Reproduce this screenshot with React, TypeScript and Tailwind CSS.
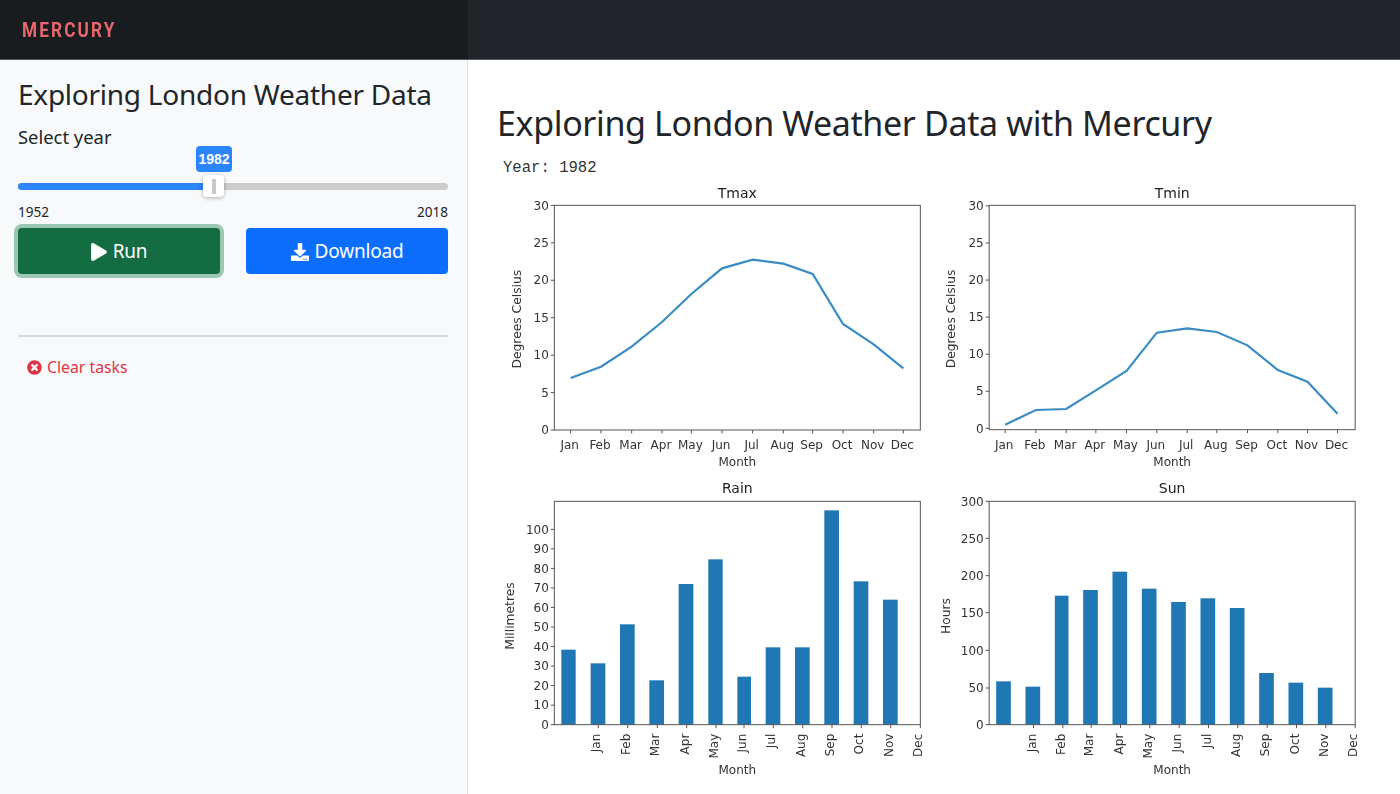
import { FaPlay, FaDownload, FaTimesCircle } from "react-icons/fa";

const MONTHS = ["Jan", "Feb", "Mar", "Apr", "May", "Jun", "Jul", "Aug", "Sep", "Oct", "Nov", "Dec"];
const SLIDER_PERCENT = ((1982 - 1952) / (2018 - 1952)) * 100;

interface ChartProps {
  title: string;
  yLabel: string;
  yLabelX: number;
  dx: number;
  top: number;
  bottom: number;
  yTicks: [string, number][];
  xTicks: number[];
  rotated?: boolean;
  line?: number[];
  bars?: [number, number, number][];
}

// all positions are measured in the enlarged crop, so the 3x scale goes here
function Chart({ title, yLabel, yLabelX, dx, top, bottom, yTicks, xTicks, rotated, line, bars }: ChartProps) {
  const left = dx === -7 ? 193 : 176;
  const right = left + 1098;
  const x = (v: number) => v / 3 + dx;
  const y = (v: number) => v / 3;
  const midX = x((left + right) / 2);

  return (
    <svg width="435" height={rotated ? 306 : 296} className="block blur-[0.45px]" fontFamily="'DejaVu Sans', sans-serif">
      <text x={midX} y={y(top) - (rotated ? 8 : 7)} fontSize="14" textAnchor="middle" fill="#222">{title}</text>
      {bars?.map(([a, b, h], i) => (
        <rect key={i} x={x(a)} y={y(h)} width={(b - a) / 3} height={(bottom - h) / 3} fill="#1f77b4" />
      ))}
      {line && (
        <polyline
          points={line.map((v, i) => `${x(xTicks[i])},${y(v)}`).join(" ")}
          fill="none"
          stroke="#3a8cc2"
          strokeWidth="2.2"
        />
      )}
      <rect x={x(left)} y={y(top)} width="366" height={(bottom - top) / 3} fill="none" stroke="#555" strokeWidth="1" />
      {yTicks.map(([label, v]) => (
        <g key={label}>
          <line x1={x(left) - 3.5} x2={x(left)} y1={y(v)} y2={y(v)} stroke="#555" />
          <text x={x(left) - 5.5} y={y(v) + 4.2} fontSize="12" textAnchor="end" fill="#333">{label}</text>
        </g>
      ))}
      {xTicks.map((t, i) => (
        <g key={t}>
          <line x1={x(t)} x2={x(t)} y1={y(bottom)} y2={y(bottom) + 3.5} stroke="#555" />
          {rotated ? (
            <text
              transform={`translate(${x(t) + 2} ${y(bottom) + 9}) rotate(-90)`}
              fontSize="12"
              textAnchor="end"
              fill="#333"
            >
              {MONTHS[i]}
            </text>
          ) : (
            <text x={x(t) - 1} y={y(bottom) + 19} fontSize="12" textAnchor="middle" fill="#333">{MONTHS[i]}</text>
          )}
        </g>
      ))}
      <text x={midX} y={y(bottom) + (rotated ? 49 : 36)} fontSize="12" textAnchor="middle" fill="#333">Month</text>
      <text
        transform={`translate(${yLabelX} ${y((top + bottom) / 2) + (rotated ? 3 : 1.5)}) rotate(-90)`}
        fontSize="12.3"
        textAnchor="middle"
        fill="#333"
      >
        {yLabel}
      </text>
    </svg>
  );
}

const tempTicks = (zero: number, step: number): [string, number][] =>
  [0, 5, 10, 15, 20, 25, 30].map((v, i) => [String(v), zero - i * step]);

export default function App() {
  return (
    <div className="h-[794px] overflow-hidden bg-white text-[#212529] font-['Noto_Sans',sans-serif]">
      <header className="flex h-[60px] border-b border-[#55585c] bg-[#212529]">
        <div className="flex w-[468px] items-center bg-[#191c1f] pl-[22px] pt-[2px]">
          <span className="origin-left scale-x-[0.82] font-['Roboto',sans-serif] text-[21px] font-bold leading-none tracking-[2.6px] text-[#e8666d]">
            MERCURY
          </span>
        </div>
      </header>
      <div className="flex">
        <aside className="h-[734px] w-[468px] shrink-0 border-r border-[#dee2e6] bg-[#f8f9fa] pl-[18px] pr-[19px]">
          <h3 className="mt-[14px] text-[28px] leading-[40px] tracking-[-0.25px] whitespace-nowrap">Exploring London Weather Data</h3>
          <p className="mt-[11px] text-[18.4px] leading-[24px]">Select year</p>

          <div className="relative mt-[34px] h-[7px] rounded-full bg-[#cccccc]">
            <div className="h-full rounded-l-full bg-[#2b85ff]" style={{ width: `${SLIDER_PERCENT}%` }} />
            <div className="absolute left-[178px] top-[-37px] flex h-[26px] w-[36px] items-center justify-center rounded bg-[#2b85ff] font-['Liberation_Sans',sans-serif] text-[14px] font-bold text-white">
              1982
            </div>
            <div className="absolute left-[185px] top-[-8px] flex h-[22px] w-[21px] items-center justify-center rounded bg-white shadow-[0_1px_4px_rgba(0,0,0,0.3)]">
              <div className="h-[15px] w-[4px] bg-[#c8c8c8]" />
            </div>
          </div>
          <div className="mt-[13px] flex justify-between text-[13.6px] leading-[17px]">
            <span>1952</span>
            <span>2018</span>
          </div>

          <div className="mt-[8px] flex gap-[26px]">
            <button className="flex h-[46px] w-[202px] items-center justify-center gap-[6px] rounded-[4px] bg-[#146c43] pt-[1px] text-[19px] tracking-[-0.2px] text-white ring-4 ring-[#9cc8b3]">
              <FaPlay className="h-[18px] w-[16px]" />
              Run
            </button>
            <button className="flex h-[46px] w-[202px] items-center justify-center gap-[6px] rounded-[4px] bg-[#0d6efd] pt-[1px] text-[19px] tracking-[-0.2px] text-white">
              <FaDownload className="h-[18px] w-[18px]" />
              Download
            </button>
          </div>

          <hr className="mt-[61px] border-t-2 border-[#d9dadb]" />

          <div className="mt-[18px] flex items-center gap-[5px] pl-[9px] text-[15.8px] leading-[24px] text-[#dc3545]">
            <FaTimesCircle className="h-[15px] w-[15px]" />
            Clear tasks
          </div>
        </aside>

        <main className="min-w-0 flex-1 pl-[29px]">
          <h1 className="mt-[38px] text-[34px] leading-[50px] tracking-[-0.36px] whitespace-nowrap">Exploring London Weather Data with Mercury</h1>
          <pre className="mt-[10px] h-[22px] pl-[6px] font-['Liberation_Mono',monospace] text-[15.6px] leading-[20px] text-[#333]">Year: 1982</pre>
          <div className="grid w-[870px] grid-cols-[434.5px_435px]">
            <Chart
              title="Tmax"
              yLabel="Degrees Celsius"
              yLabelX={24}
              dx={-7}
              top={76}
              bottom={750}
              yTicks={tempTicks(750, 112.3)}
              xTicks={[242, 333, 425, 516, 604, 696, 788, 880, 968, 1059, 1151, 1240]}
              line={[594, 560, 500, 426, 342, 265, 239, 251, 282, 432, 493, 565]}
            />
            <Chart
              title="Tmin"
              yLabel="Degrees Celsius"
              yLabelX={22.5}
              dx={-1.5}
              top={76}
              bottom={749}
              yTicks={tempTicks(745, 111.2)}
              xTicks={[224, 316, 407, 496, 588, 679, 770, 859, 951, 1042, 1131, 1221]}
              line={[734, 690, 687, 631, 573, 458, 445, 456, 496, 570, 605, 701]}
            />
            <Chart
              title="Rain"
              yLabel="Millimetres"
              yLabelX={17}
              dx={-7}
              top={76}
              bottom={746}
              yTicks={["0", "10", "20", "30", "40", "50", "60", "70", "80", "90", "100"].map((l, i) => [l, 746 - i * 58.6])}
              xTicks={[325, 413, 502, 590, 678, 762, 850, 938, 1026, 1114, 1202, 1291]}
              rotated
              bars={[
                [214, 257, 521], [302, 346, 562], [390, 434, 445], [478, 522, 613], [566, 610, 324], [655, 698, 250],
                [742, 783, 602], [827, 871, 514], [915, 959, 514], [1003, 1047, 103], [1091, 1135, 316], [1179, 1223, 371],
              ]}
            />
            <Chart
              title="Sun"
              yLabel="Hours"
              yLabelX={17.5}
              dx={-1.5}
              top={76}
              bottom={746}
              yTicks={[["0", 746], ["50", 636], ["100", 523], ["150", 410], ["200", 299], ["250", 187], ["300", 76]]}
              xTicks={[309, 397, 482, 570, 658, 746, 834, 922, 1010, 1098, 1186, 1274]}
              rotated
              bars={[
                [197, 241, 616], [285, 329, 632], [373, 414, 359], [458, 502, 342], [546, 590, 287], [634, 678, 338],
                [722, 766, 378], [810, 854, 367], [898, 942, 396], [986, 1030, 591], [1074, 1118, 620], [1162, 1206, 635],
              ]}
            />
          </div>
        </main>
      </div>
    </div>
  );
}
